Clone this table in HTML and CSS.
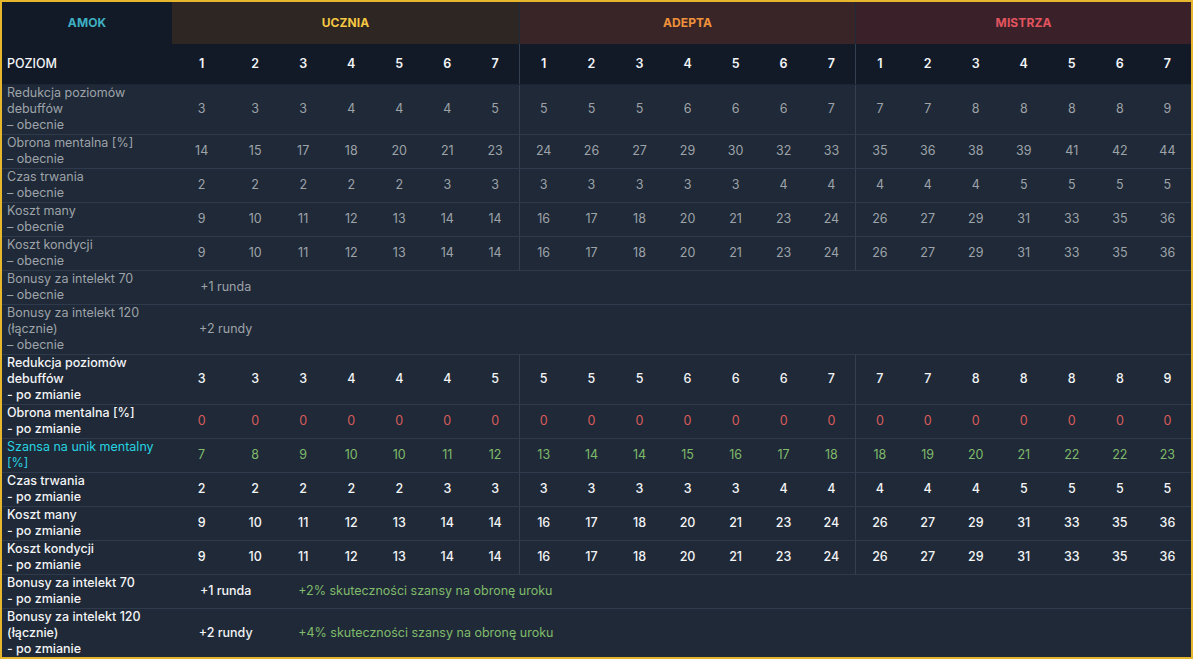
FILE: index.html
```html
<!DOCTYPE html>
<html lang="pl">
<head>
<meta charset="utf-8">
<title>Amok</title>
<link rel="stylesheet" href="styles.css">
</head>
<body>
<div class="frame">
<table class="tbl">
<colgroup>
<col class="c-label"><col class="c-first"><col class="c"><col class="c"><col class="c"><col class="c"><col class="c"><col class="c">
<col class="c"><col class="c"><col class="c"><col class="c"><col class="c"><col class="c"><col class="c">
<col class="c"><col class="c"><col class="c"><col class="c"><col class="c"><col class="c"><col class="c-last">
</colgroup>
<thead>
<tr class="groups">
<th class="g-amok">AMOK</th>
<th class="g-ucz" colspan="7">UCZNIA</th>
<th class="g-ade" colspan="7">ADEPTA</th>
<th class="g-mis" colspan="7">MISTRZA</th>
</tr>
<tr class="levels">
<th class="lab">POZIOM</th>
<th>1</th><th>2</th><th>3</th><th>4</th><th>5</th><th>6</th><th class="sep">7</th>
<th>1</th><th>2</th><th>3</th><th>4</th><th>5</th><th>6</th><th class="sep">7</th>
<th>1</th><th>2</th><th>3</th><th>4</th><th>5</th><th>6</th><th>7</th>
</tr>
</thead>
<tbody>
<tr class="cur">
<td class="lab">Redukcja poziomów<br>debuffów<br>– obecnie</td>
<td>3</td><td>3</td><td>3</td><td>4</td><td>4</td><td>4</td><td class="sep">5</td>
<td>5</td><td>5</td><td>5</td><td>6</td><td>6</td><td>6</td><td class="sep">7</td>
<td>7</td><td>7</td><td>8</td><td>8</td><td>8</td><td>8</td><td>9</td>
</tr>
<tr class="cur">
<td class="lab">Obrona mentalna [%]<br>– obecnie</td>
<td>14</td><td>15</td><td>17</td><td>18</td><td>20</td><td>21</td><td class="sep">23</td>
<td>24</td><td>26</td><td>27</td><td>29</td><td>30</td><td>32</td><td class="sep">33</td>
<td>35</td><td>36</td><td>38</td><td>39</td><td>41</td><td>42</td><td>44</td>
</tr>
<tr class="cur">
<td class="lab">Czas trwania<br>– obecnie</td>
<td>2</td><td>2</td><td>2</td><td>2</td><td>2</td><td>3</td><td class="sep">3</td>
<td>3</td><td>3</td><td>3</td><td>3</td><td>3</td><td>4</td><td class="sep">4</td>
<td>4</td><td>4</td><td>4</td><td>5</td><td>5</td><td>5</td><td>5</td>
</tr>
<tr class="cur">
<td class="lab">Koszt many<br>– obecnie</td>
<td>9</td><td>10</td><td>11</td><td>12</td><td>13</td><td>14</td><td class="sep">14</td>
<td>16</td><td>17</td><td>18</td><td>20</td><td>21</td><td>23</td><td class="sep">24</td>
<td>26</td><td>27</td><td>29</td><td>31</td><td>33</td><td>35</td><td>36</td>
</tr>
<tr class="cur">
<td class="lab">Koszt kondycji<br>– obecnie</td>
<td>9</td><td>10</td><td>11</td><td>12</td><td>13</td><td>14</td><td class="sep">14</td>
<td>16</td><td>17</td><td>18</td><td>20</td><td>21</td><td>23</td><td class="sep">24</td>
<td>26</td><td>27</td><td>29</td><td>31</td><td>33</td><td>35</td><td>36</td>
</tr>
<tr class="cur">
<td class="lab">Bonusy za intelekt 70<br>– obecnie</td>
<td colspan="2">+1 runda</td>
<td colspan="19"></td>
</tr>
<tr class="cur">
<td class="lab">Bonusy za intelekt 120<br>(łącznie)<br>– obecnie</td>
<td colspan="2">+2 rundy</td>
<td colspan="19"></td>
</tr>
<tr class="new">
<td class="lab">Redukcja poziomów<br>debuffów<br>- po zmianie</td>
<td>3</td><td>3</td><td>3</td><td>4</td><td>4</td><td>4</td><td class="sep">5</td>
<td>5</td><td>5</td><td>5</td><td>6</td><td>6</td><td>6</td><td class="sep">7</td>
<td>7</td><td>7</td><td>8</td><td>8</td><td>8</td><td>8</td><td>9</td>
</tr>
<tr class="new red">
<td class="lab">Obrona mentalna [%]<br>- po zmianie</td>
<td>0</td><td>0</td><td>0</td><td>0</td><td>0</td><td>0</td><td class="sep">0</td>
<td>0</td><td>0</td><td>0</td><td>0</td><td>0</td><td>0</td><td class="sep">0</td>
<td>0</td><td>0</td><td>0</td><td>0</td><td>0</td><td>0</td><td>0</td>
</tr>
<tr class="new green">
<td class="lab cyan">Szansa na unik mentalny<br>[%]</td>
<td>7</td><td>8</td><td>9</td><td>10</td><td>10</td><td>11</td><td class="sep">12</td>
<td>13</td><td>14</td><td>14</td><td>15</td><td>16</td><td>17</td><td class="sep">18</td>
<td>18</td><td>19</td><td>20</td><td>21</td><td>22</td><td>22</td><td>23</td>
</tr>
<tr class="new">
<td class="lab">Czas trwania<br>- po zmianie</td>
<td>2</td><td>2</td><td>2</td><td>2</td><td>2</td><td>3</td><td class="sep">3</td>
<td>3</td><td>3</td><td>3</td><td>3</td><td>3</td><td>4</td><td class="sep">4</td>
<td>4</td><td>4</td><td>4</td><td>5</td><td>5</td><td>5</td><td>5</td>
</tr>
<tr class="new">
<td class="lab">Koszt many<br>- po zmianie</td>
<td>9</td><td>10</td><td>11</td><td>12</td><td>13</td><td>14</td><td class="sep">14</td>
<td>16</td><td>17</td><td>18</td><td>20</td><td>21</td><td>23</td><td class="sep">24</td>
<td>26</td><td>27</td><td>29</td><td>31</td><td>33</td><td>35</td><td>36</td>
</tr>
<tr class="new">
<td class="lab">Koszt kondycji<br>- po zmianie</td>
<td>9</td><td>10</td><td>11</td><td>12</td><td>13</td><td>14</td><td class="sep">14</td>
<td>16</td><td>17</td><td>18</td><td>20</td><td>21</td><td>23</td><td class="sep">24</td>
<td>26</td><td>27</td><td>29</td><td>31</td><td>33</td><td>35</td><td>36</td>
</tr>
<tr class="new">
<td class="lab">Bonusy za intelekt 70<br>- po zmianie</td>
<td colspan="2">+1 runda</td>
<td colspan="19" class="bonus">+2% skuteczności szansy na obronę uroku</td>
</tr>
<tr class="new last">
<td class="lab">Bonusy za intelekt 120<br>(łącznie)<br>- po zmianie</td>
<td colspan="2">+2 rundy</td>
<td colspan="19" class="bonus">+4% skuteczności szansy na obronę uroku</td>
</tr>
</tbody>
</table>
</div>
</body>
</html>
```
FILE: styles.css
```css
html, body {
  margin: 0;
  padding: 0;
  background: #1f2937;
}
.frame {
  box-sizing: border-box;
  width: 1193px;
  height: 659px;
  border: 2px solid #e6b62c;
  background: #1f2937;
  overflow: hidden;
  font-family: Inter, Roboto, "Noto Sans", sans-serif;
}
.tbl {
  border-collapse: collapse;
  table-layout: fixed;
  width: 1189px;
}
.c-label { width: 170px; }
.c-first { width: 59px; }
.c { width: 48px; }
.c-last { width: 47px; }

.tbl th, .tbl td {
  padding: 0 0 1px;
  text-align: center;
  vertical-align: middle;
}
.groups th {
  height: 41px;
  font-size: 12px;
  font-weight: 700;
  letter-spacing: 0.1px;
}
.g-amok { background: #121a28; color: #3eb0c2; }
.g-ucz { background: #2e2622; color: #f5c843; border-right: 1px solid #1f2937; }
.g-ade { background: #392527; color: #f0913b; border-right: 1px solid #1f2937; }
.g-mis { background: #3a2129; color: #e2545f; }

.levels th {
  height: 39px;
  background: #121a28;
  color: #f4f5f7;
  font-size: 12.5px;
  font-weight: 600;
  border-bottom: 1px solid #1c2533;
}
.levels th.lab {
  font-weight: 500;
}
.lab {
  text-align: left !important;
  padding-left: 5px !important;
}
.tbl td {
  font-size: 12.5px;
  line-height: 16px;
  border-bottom: 1px solid #2f3b4c;
}
.tbl td.lab {
  font-size: 12.5px;
}
.sep {
  border-right: 1px solid #34404f;
}
.cur td {
  color: #9ea3a9;
}
.new td {
  color: #f3f4f6;
  font-weight: 500;
}
.red td:not(.lab) {
  color: #d95c5c;
  font-weight: 400;
}
.green td:not(.lab) {
  color: #7fbb6b;
  font-weight: 400;
}
.new td.cyan {
  color: #27d3e0;
  font-weight: 400;
}
.new td.bonus {
  text-align: left;
  padding-left: 19px;
  color: #7fbb6b;
  font-weight: 400;
}
.last td {
  border-bottom: none;
}
```
